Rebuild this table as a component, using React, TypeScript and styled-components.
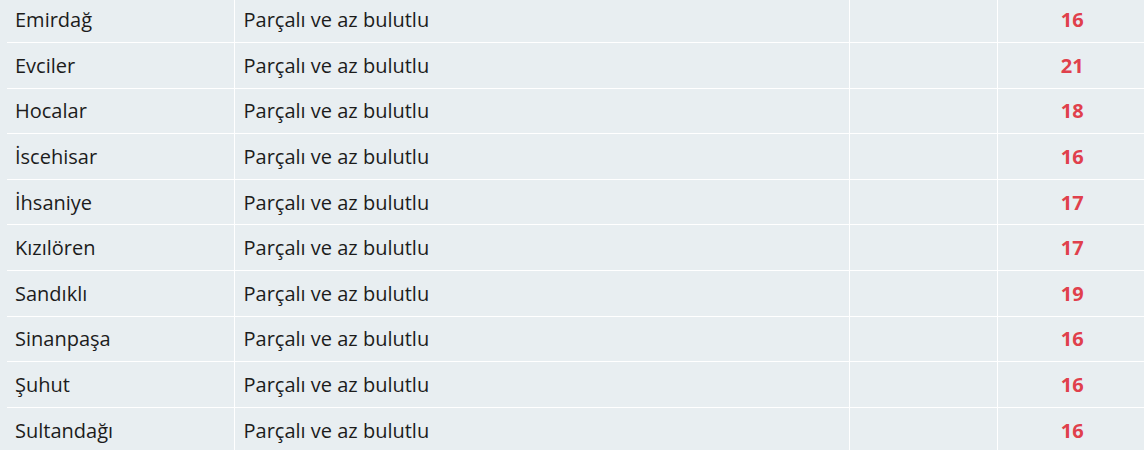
import React from 'react'
import styled, { createGlobalStyle } from 'styled-components'

const GlobalStyle = createGlobalStyle`
    html, body {
        margin: 0;
        padding: 0;
        background: #e8eef1;
        overflow: hidden;
        font-family: "Open Sans", "Noto Sans", sans-serif;
    }
`

const Wrapper = styled.div`
    width: 1144px;
    height: 450px;
    overflow: hidden;
    background: #e8eef1;
`

const Table = styled.table`
    margin-top: -3px;
    margin-left: 7px;
    width: 1140px;
    border-collapse: collapse;
    table-layout: fixed;
`

const Col = styled.col<{ $w: number }>`
    width: ${p => p.$w}px;
`

const Row = styled.tr`
    height: 45.6px;
    border-bottom: 1px solid #ffffff;
`

const Cell = styled.td<{ $align?: 'left' | 'center'; $pad?: number; $first?: boolean }>`
    padding: 0 0 0 ${p => p.$pad ?? 8}px;
    text-align: ${p => p.$align ?? 'left'};
    border-left: ${p => (p.$first ? 'none' : '1px solid #ffffff')};
    font-size: 20px;
    color: #1c1c1c;
    vertical-align: middle;
    white-space: nowrap;
`

const Temp = styled(Cell)`
    padding: 0;
    font-weight: 700;
    color: #e0404c;
`

const rows = [
    { name: 'Emirdağ', temp: 16 },
    { name: 'Evciler', temp: 21 },
    { name: 'Hocalar', temp: 18 },
    { name: 'İscehisar', temp: 16 },
    { name: 'İhsaniye', temp: 17 },
    { name: 'Kızılören', temp: 17 },
    { name: 'Sandıklı', temp: 19 },
    { name: 'Sinanpaşa', temp: 16 },
    { name: 'Şuhut', temp: 16 },
    { name: 'Sultandağı', temp: 16 },
]

const App: React.FC = () => {
    return (
        <>
            <GlobalStyle />
            <Wrapper>
                <Table>
                    <colgroup>
                        <Col $w={227} />
                        <Col $w={615} />
                        <Col $w={148} />
                        <Col $w={150} />
                    </colgroup>
                    <tbody>
                        {rows.map(r => (
                            <Row key={r.name}>
                                <Cell $first>{r.name}</Cell>
                                <Cell $pad={9}>Parçalı ve az bulutlu</Cell>
                                <Cell />
                                <Temp $align="center">{r.temp}</Temp>
                            </Row>
                        ))}
                    </tbody>
                </Table>
            </Wrapper>
        </>
    )
}

export default App
